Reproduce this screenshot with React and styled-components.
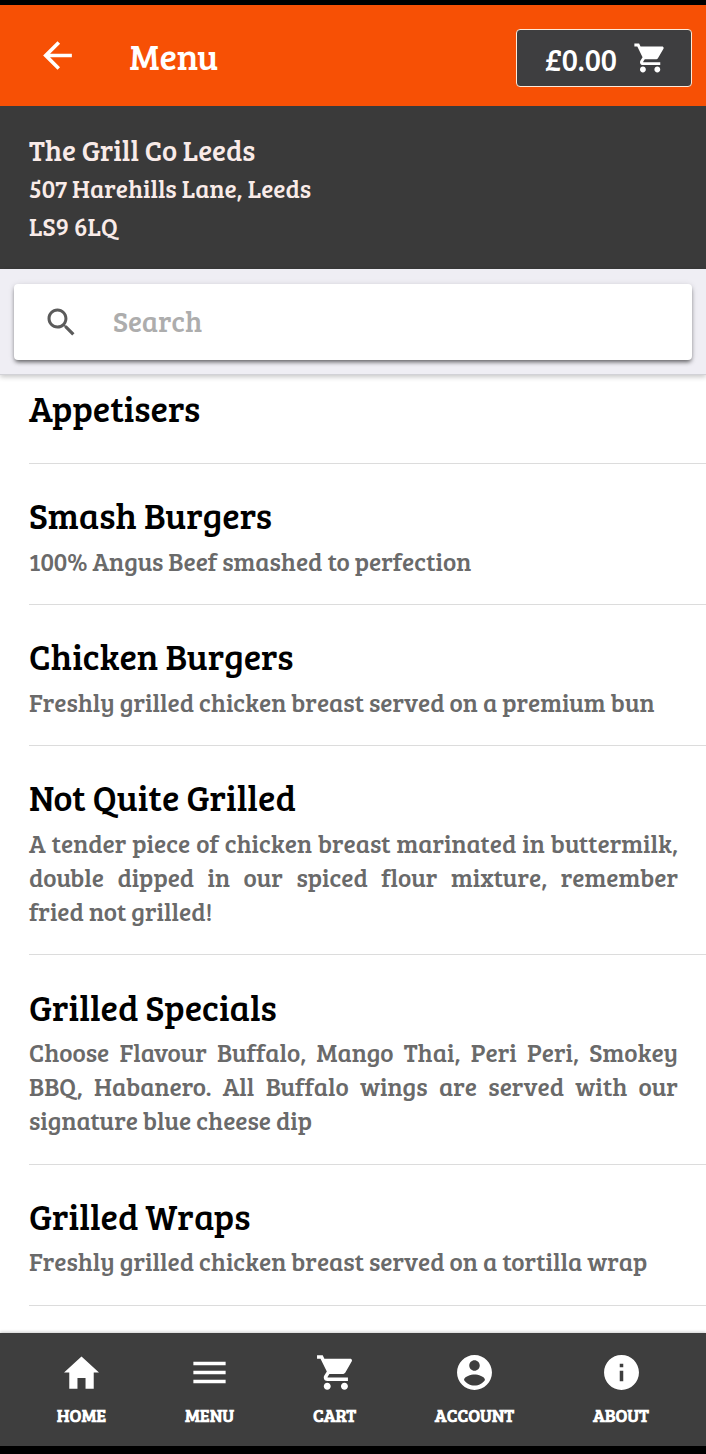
import React from "react";
import styled, { createGlobalStyle } from "styled-components";
import {
  IoMdArrowBack,
  IoMdCart,
  IoMdSearch,
  IoMdHome,
  IoMdMenu,
  IoMdContact,
  IoMdInformationCircle,
} from "react-icons/io";

const GlobalStyle = createGlobalStyle`
  * { box-sizing: border-box; }
  body {
    margin: 0;
    background: #000;
    font-family: "Bree Serif", "DejaVu Serif Condensed", "DejaVu Serif", serif;
  }
  h1, h2, p { margin: 0; font-weight: 400; }
`;

const Screen = styled.div`
  display: flex;
  flex-direction: column;
  height: 1454px;
  padding: 5px 0 8px;
  background: #000;
  overflow: hidden;
`;

const Toolbar = styled.header`
  display: flex;
  align-items: center;
  flex: none;
  height: 101px;
  padding: 0 14px 0 36px;
  background: #f75005;
  color: #fff;
`;

const BackButton = styled.button`
  display: flex;
  margin-bottom: 1px;
  padding: 0;
  border: 0;
  background: none;
  color: #fff;
  font-size: 43px;
`;

const Title = styled.h1`
  flex: 1;
  padding: 0 0 1px 50.5px;
  font-size: 35.9px;
`;

const CartButton = styled.button`
  display: flex;
  align-items: center;
  justify-content: space-between;
  width: 176px;
  height: 58px;
  margin-top: 5px;
  padding: 0 24px 0 28px;
  border: 1.5px solid #ffe9d8;
  border-radius: 4px;
  background: #3e3e40;
  color: #fff;
  font-family: inherit;
  font-size: 30.2px;

  svg { font-size: 36px; }
`;

const Address = styled.section`
  flex: none;
  height: 163px;
  padding: 24px 29px 0;
  background: #3a3a3a;
  color: #f9ebe8;
`;

const AddressLine = styled.p`
  font-size: ${(p) => (p.$name ? 28.7 : 25.1)}px;
  line-height: ${(p) => (p.$name ? 39 : 38)}px;
`;

const SearchBar = styled.div`
  flex: none;
  height: 106px;
  padding: 15px 14px 14px;
  background: #efeef4;
  border-bottom: 1px solid #d2d2d7;
  box-shadow: 0 2px 5px rgba(0, 0, 0, 0.22);
  z-index: 1;
`;

const SearchField = styled.label`
  display: flex;
  align-items: center;
  height: 76px;
  padding-left: 29px;
  border-radius: 4px;
  background: #fff;
  box-shadow: 0 3px 4px -1px rgba(0, 0, 0, 0.55), 0 1px 6px rgba(0, 0, 0, 0.12);
  color: #5b5b5b;
  font-size: 36px;
`;

const Placeholder = styled.span`
  padding: 0 0 3px 34px;
  color: #adadad;
  font-size: 28.7px;
`;

const List = styled.main`
  flex: 1;
  min-height: 0;
  margin-top: -18px;
  padding-left: 29px;
  background: #fff;
  overflow: hidden;
`;

const Row = styled.article`
  padding: 26.2px 28px 26.4px 0;
  border-bottom: 1px solid #dcdcdc;
`;

const RowTitle = styled.h2`
  margin-bottom: 3.4px;
  color: #000;
  font-size: 35.9px;
  line-height: 50px;
`;

const Description = styled.p`
  color: #6a6a6a;
  font-size: 25.15px;
  line-height: 34.1px;
  text-align: justify;
`;

const Nav = styled.nav`
  display: flex;
  flex: none;
  justify-content: space-between;
  height: 113px;
  padding: 18px 56.5px 0;
  background: #3e3e3e;
  box-shadow: 0 -1px 3px rgba(0, 0, 0, 0.2);
  z-index: 1;
`;

const Tab = styled.a`
  display: flex;
  flex-direction: column;
  align-items: center;
  width: ${(p) => p.$width}px;
  color: #fff;
  font-size: 43px;
`;

const TabLabel = styled.span`
  margin-top: 10px;
  font-size: 17.9px;
  font-weight: 700;
  line-height: 22px;
  white-space: nowrap;
`;

const sections = [
  { title: "Appetisers" },
  { title: "Smash Burgers", text: "100% Angus Beef smashed to perfection" },
  { title: "Chicken Burgers", text: "Freshly grilled chicken breast served on a premium bun" },
  {
    title: "Not Quite Grilled",
    text: "A tender piece of chicken breast marinated in buttermilk, double dipped in our spiced flour mixture, remember fried\u00a0not grilled!",
  },
  {
    title: "Grilled Specials",
    text: "Choose Flavour Buffalo, Mango Thai, Peri Peri, Smokey BBQ, Habanero. All Buffalo wings are served with our signature blue cheese dip",
  },
  { title: "Grilled Wraps", text: "Freshly grilled chicken breast served on a tortilla wrap" },
];

const tabs = [
  { label: "HOME", Icon: IoMdHome, width: 50 },
  { label: "MENU", Icon: IoMdMenu, width: 50 },
  { label: "CART", Icon: IoMdCart, width: 44 },
  { label: "ACCOUNT", Icon: IoMdContact, width: 80 },
  { label: "ABOUT", Icon: IoMdInformationCircle, width: 57 },
];

export default function App() {
  return (
    <Screen>
      <GlobalStyle />
      <Toolbar>
        <BackButton aria-label="Back"><IoMdArrowBack /></BackButton>
        <Title>Menu</Title>
        <CartButton>£0.00<IoMdCart /></CartButton>
      </Toolbar>
      <Address>
        <AddressLine $name>The Grill Co Leeds</AddressLine>
        <AddressLine>507 Harehills Lane, Leeds</AddressLine>
        <AddressLine>LS9 6LQ</AddressLine>
      </Address>
      <SearchBar>
        <SearchField>
          <IoMdSearch />
          <Placeholder>Search</Placeholder>
        </SearchField>
      </SearchBar>
      <List>
        {sections.map((s) => (
          <Row key={s.title}>
            <RowTitle>{s.title}</RowTitle>
            {s.text && <Description>{s.text}</Description>}
          </Row>
        ))}
      </List>
      <Nav>
        {tabs.map(({ label, Icon, width }) => (
          <Tab key={label} $width={width}>
            <Icon />
            <TabLabel>{label}</TabLabel>
          </Tab>
        ))}
      </Nav>
    </Screen>
  );
}
